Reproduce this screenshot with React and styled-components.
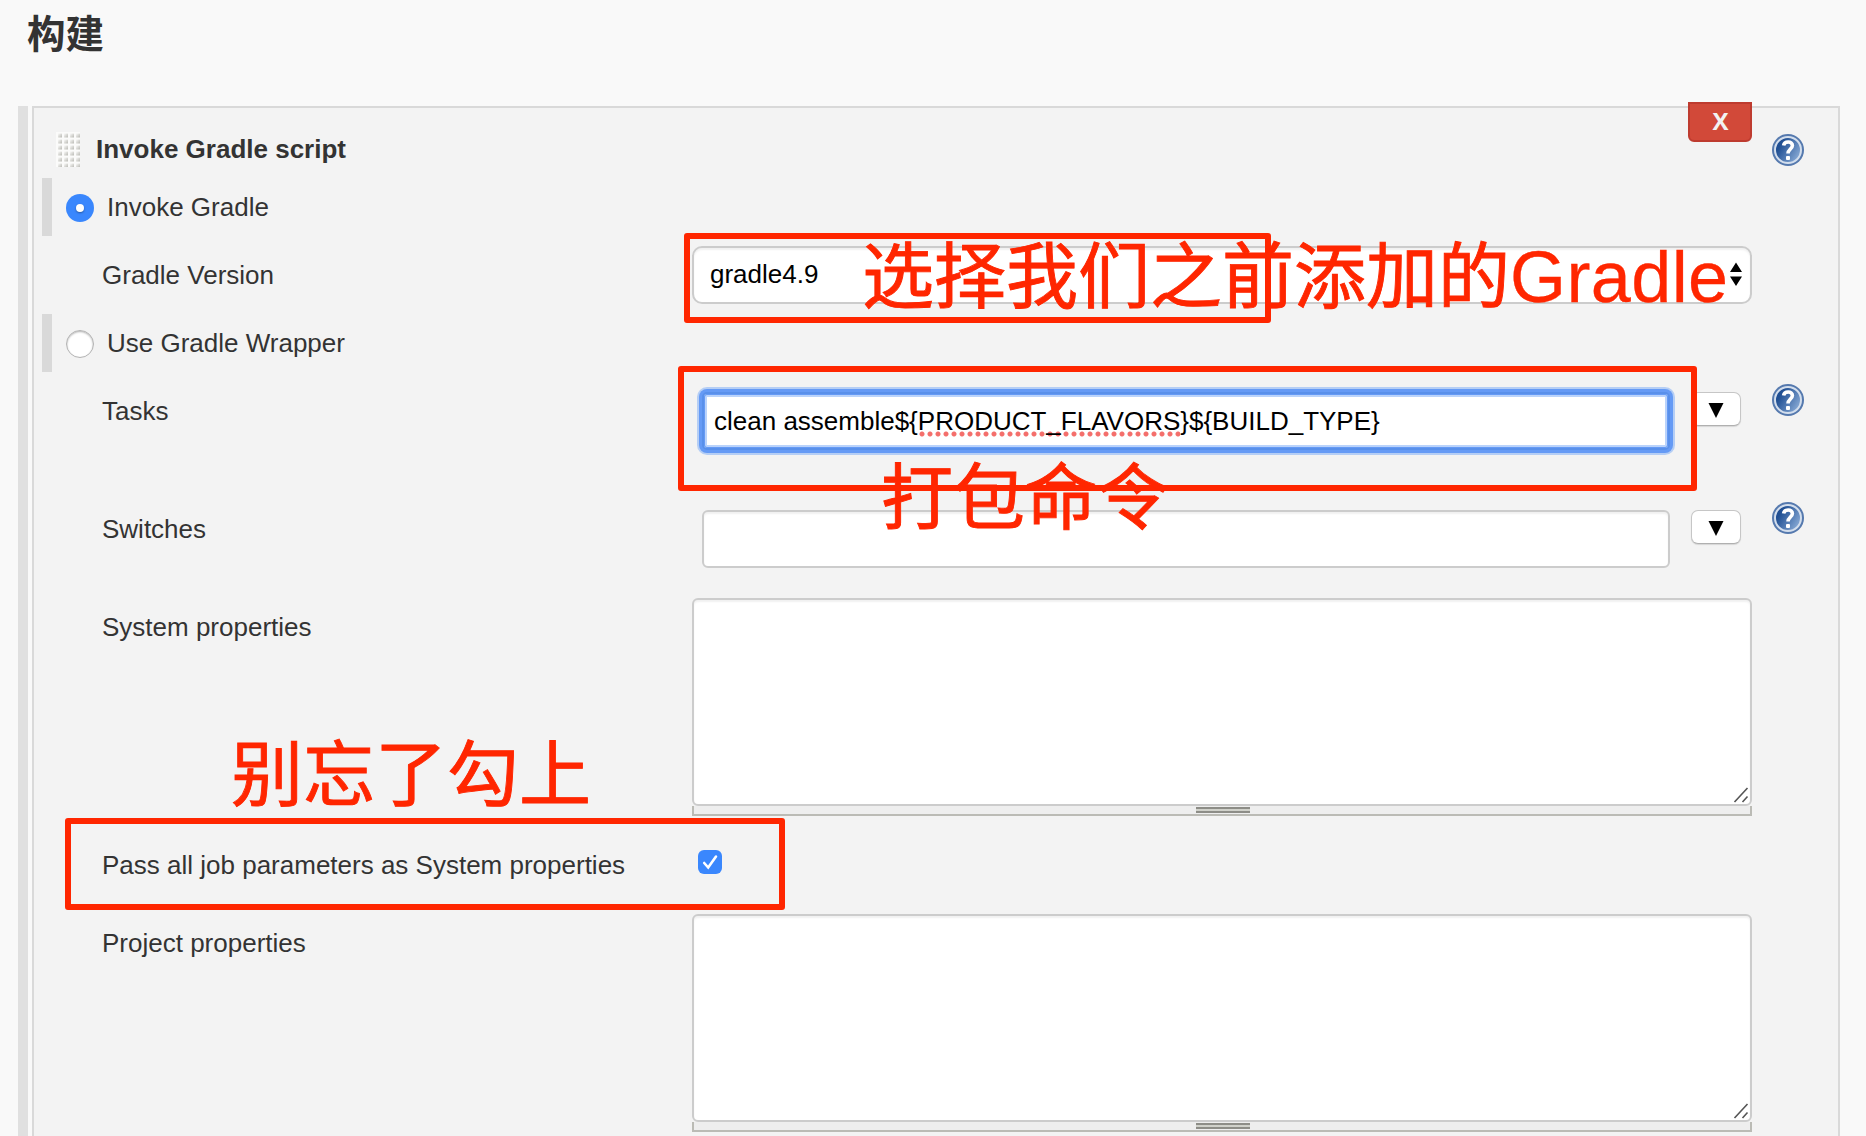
import React from 'react';
import styled, { createGlobalStyle } from 'styled-components';

const RED = '#ff2600';

const GlobalStyle = createGlobalStyle`
  *, *::before, *::after { box-sizing: border-box; }
  body {
    margin: 0;
    background: #f9f9f9;
    color: #333;
    font: 26px/30px "Liberation Sans", "Noto Sans CJK SC", sans-serif;
  }
`;

const Page = styled.main`
  position: relative;
  height: 1136px;
  overflow: hidden;
  display: flex;
  flex-direction: column;
`;

const Heading = styled.h1`
  margin: 0;
  height: 106px;
  padding: 4px 0 0 27px;
  font: 700 38.5px/54px "Noto Sans CJK SC", sans-serif;
`;

const Builder = styled.section`
  flex: 1;
  min-height: 0;
  display: flex;
  gap: 4px;
  padding: 0 26px 0 18px;
`;

const Rail = styled.div`
  width: 10px;
  background: #e0e0e0;
`;

const Panel = styled.div`
  position: relative;
  flex: 1;
  border: 2px solid #d9d9d9;
  border-bottom: 0;
  background: #f3f3f3;
`;

const DeleteButton = styled.button`
  position: absolute;
  top: -6px;
  right: 86px;
  width: 64px;
  height: 40px;
  padding: 0 0 3px 1px;
  border: 2px solid #be3b2f;
  border-radius: 0 0 6px 6px;
  background: #d24939;
  color: #f2f2f2;
  font: 700 24px/32px "Open Sans", "Noto Sans", sans-serif;
`;

const Row = styled.div`
  display: grid;
  grid-template-columns: 658px 1060px 52px;
  height: ${(p) => p.$h}px;
`;

const TitleCell = styled.div`
  display: flex;
  align-items: flex-start;
  gap: 16px;
  padding: 24px 0 0 22px;
  font-weight: 700;
`;

const TitleText = styled.span`
  padding-top: 2px;
`;

const RadioCell = styled.label`
  display: flex;
  gap: 14px;
  margin-left: 8px;
  height: 58px;
`;

const RadioBar = styled.span`
  width: 10px;
  background: #d9d9d9;
`;

const Radio = styled.span`
  width: 28px;
  height: 28px;
  margin-top: 16px;
  display: grid;
  place-items: center;
  border-radius: 50%;
  border: ${(p) => (p.$on ? '0' : '1px solid #b3b3b3')};
  background: ${(p) => (p.$on ? '#3a87fd' : '#fff')};
  box-shadow: ${(p) => (p.$on ? 'none' : 'inset 0 1px 2px rgba(0,0,0,.3)')};
  &::after {
    content: '';
    width: 8px;
    height: 8px;
    border-radius: 50%;
    background: #fff;
    box-shadow: ${(p) => (p.$on ? '0 1px 2px rgba(0,0,0,.35)' : 'none')};
  }
`;

const RadioText = styled.span`
  margin-left: -1px;
  padding-top: 14px;
`;

const Label = styled.div`
  padding: ${(p) => p.$t}px 0 0 68px;
  white-space: nowrap;
`;

const Field = styled.div`
  display: flex;
  align-items: flex-start;
  padding-top: ${(p) => p.$t || 0}px;
  padding-left: ${(p) => p.$l || 0}px;
`;

const HelpCell = styled.div`
  padding: ${(p) => p.$t}px 0 0 20px;
  line-height: 0;
`;

const Select = styled.div`
  width: 1060px;
  height: 58px;
  display: flex;
  justify-content: space-between;
  align-items: flex-start;
  padding: 11px 8px 0 16px;
  border: 2px solid #ccc;
  border-radius: 10px;
  background: #fff;
  box-shadow: inset 0 2px 2px rgba(0, 0, 0, 0.06);
  color: #000;
`;

const TextBox = styled.div`
  width: 968px;
  height: 58px;
  padding: 12px 10px;
  border: 2px solid #ccc;
  border-radius: 6px;
  background: #fff;
  color: #000;
  box-shadow: inset 0 2px 2px rgba(0, 0, 0, 0.06);
  ${(p) =>
    p.$focus &&
    `border-color: #5990ea;
     border-radius: 5px;
     box-shadow: 0 0 0 3px #659af5, 0 0 0 5px #b5cef5, inset 0 0 0 1px #659af5, inset 0 0 0 3px #bad3fb;`}
`;

const Misspelt = styled.span`
  background: radial-gradient(circle at 50% 50%, #f46e6b 2px, rgba(244, 110, 107, 0) 3px) 0 100% / 8px 6px repeat-x;
  padding-bottom: 1px;
`;

const DropButton = styled.button`
  width: 50px;
  height: 34px;
  margin-left: 21px;
  padding: 1px 0 0;
  display: grid;
  place-items: center;
  border: 1px solid #c6c6c6;
  border-bottom-color: #b0b0b0;
  border-radius: 7px;
  background: #fff;
  box-shadow: 0 1px 1px rgba(0, 0, 0, 0.12);
`;

const AreaGroup = styled.div`
  width: 1060px;
`;

const Area = styled.div`
  height: 208px;
  display: flex;
  justify-content: flex-end;
  align-items: flex-end;
  padding: 1px;
  border: 2px solid #ccc;
  border-radius: 6px;
  background: #fff;
  box-shadow: inset 0 2px 2px rgba(0, 0, 0, 0.06);
`;

const AreaHandle = styled.div`
  height: 10px;
  padding: 1px 0 0 2px;
  border: 2px solid #bbbbb5;
  border-top: 0;
  background: #eee;
  &::before {
    content: '';
    display: block;
    width: 54px;
    height: 6px;
    margin: 0 auto;
    border: solid #8d8d87;
    border-width: 2px 0;
    background: #d0d1ca;
  }
`;

const Check = styled.span`
  width: 24px;
  height: 24px;
  display: grid;
  place-items: center;
  border-radius: 6px;
  background: #3a87fd;
`;

const Outline = styled.div`
  position: absolute;
  left: ${(p) => p.$x}px;
  top: ${(p) => p.$y}px;
  width: ${(p) => p.$w}px;
  height: ${(p) => p.$h}px;
  border: 6px solid ${RED};
  border-radius: 3px;
`;

const Note = styled.div`
  position: absolute;
  left: ${(p) => p.$x}px;
  top: ${(p) => p.$y}px;
  color: ${RED};
  font: 72px/72px "Liberation Sans", "Noto Sans CJK SC", sans-serif;
  -webkit-text-stroke: 0.9px ${RED};
  white-space: nowrap;
`;

const Latin = styled.span`
  letter-spacing: 0.4px;
  -webkit-text-stroke: 0.3px ${RED};
`;

const Grip = () => (
  <svg width="24" height="35" viewBox="0 0 24 35">
    <defs>
      <linearGradient id="dot" x1="0" y1="0" x2="1" y2="1">
        <stop offset="0.15" stopColor="#f2f2f0" />
        <stop offset="1" stopColor="#b8b8b2" />
      </linearGradient>
      <pattern id="dots" width="6" height="6" patternUnits="userSpaceOnUse">
        <rect width="6" height="6" fill="#fbfbfa" />
        <rect x="2" y="1.5" width="4" height="4" rx="0.5" fill="url(#dot)" />
      </pattern>
    </defs>
    <rect width="24" height="35" fill="url(#dots)" />
  </svg>
);

const Help = () => (
  <svg width="32" height="32" viewBox="0 0 32 32">
    <defs>
      <linearGradient id="help" x1="0" y1="0.2" x2="1" y2="0.8">
        <stop offset="0.2" stopColor="#204f93" />
        <stop offset="1" stopColor="#8fb0da" />
      </linearGradient>
    </defs>
    <circle cx="16" cy="16" r="16" fill="#5579ae" />
    <circle cx="16" cy="16" r="13" fill="url(#help)" stroke="#d3deed" strokeWidth="2" />
    <path d="M11.600 11.500C12.400 6.800 20.400 7 20.400 11.600C20.400 15 16 15.200 16 19.600" fill="none" stroke="#fff" strokeWidth="3.6" />
    <rect x="14" y="22" width="4" height="4" rx="1" fill="#fff" />
  </svg>
);

const SelectArrows = () => (
  <svg width="12" height="30" viewBox="0 0 12 30">
    <path d="M0 13L6 3.500L12 13ZM0 17.500H12L6 27Z" fill="#000" />
  </svg>
);

const DownArrow = () => (
  <svg width="16" height="16" viewBox="0 0 16 16">
    <path d="M0.5 1H15.5L8 16Z" fill="#000" />
  </svg>
);

const Resizer = () => (
  <svg width="16" height="16" viewBox="0 0 16 16">
    <path d="M1.500 15L14.500 1M9.500 15L14.500 9.500" stroke="#555" strokeWidth="1.6" />
  </svg>
);

const CheckMark = () => (
  <svg width="24" height="24" viewBox="0 0 24 24">
    <path d="M6.200 13L10.200 17.500L18 6.500" fill="none" stroke="#fff" strokeWidth="2.6" strokeLinecap="round" />
  </svg>
);

const RadioOption = ({ on, children }) => (
  <RadioCell>
    <RadioBar />
    <Radio $on={on} />
    <RadioText>{children}</RadioText>
  </RadioCell>
);

const AreaField = () => (
  <AreaGroup>
    <Area>
      <Resizer />
    </Area>
    <AreaHandle />
  </AreaGroup>
);

export default function App() {
  return (
    <Page>
      <GlobalStyle />
      <Heading>构建</Heading>
      <Builder>
        <Rail />
        <Panel>
          <DeleteButton>X</DeleteButton>
          <Row $h={70}>
            <TitleCell>
              <Grip />
              <TitleText>Invoke Gradle script</TitleText>
            </TitleCell>
            <span />
            <HelpCell $t={26}>
              <Help />
            </HelpCell>
          </Row>
          <Row $h={68}>
            <RadioOption on>Invoke Gradle</RadioOption>
          </Row>
          <Row $h={68}>
            <Label $t={14}>Gradle Version</Label>
            <Field>
              <Select>
                gradle4.9
                <SelectArrows />
              </Select>
            </Field>
          </Row>
          <Row $h={70}>
            <RadioOption>Use Gradle Wrapper</RadioOption>
          </Row>
          <Row $h={118}>
            <Label $t={12}>Tasks</Label>
            <Field $t={8} $l={10}>
              <TextBox $focus>
                clean assemble$&#123;<Misspelt>PRODUCT_FLAVORS</Misspelt>&#125;$&#123;BUILD_TYPE&#125;
              </TextBox>
              <DropButton>
                <DownArrow />
              </DropButton>
            </Field>
            <HelpCell $t={0}>
              <Help />
            </HelpCell>
          </Row>
          <Row $h={96}>
            <Label $t={12}>Switches</Label>
            <Field $t={8} $l={10}>
              <TextBox />
              <DropButton>
                <DownArrow />
              </DropButton>
            </Field>
            <HelpCell $t={0}>
              <Help />
            </HelpCell>
          </Row>
          <Row $h={236}>
            <Label $t={14}>System properties</Label>
            <Field>
              <AreaField />
            </Field>
          </Row>
          <Row $h={80}>
            <Label $t={16}>Pass all job parameters as System properties</Label>
            <Field $t={16} $l={6}>
              <Check>
                <CheckMark />
              </Check>
            </Field>
          </Row>
          <Row $h={220}>
            <Label $t={14}>Project properties</Label>
            <Field>
              <AreaField />
            </Field>
          </Row>
        </Panel>
      </Builder>
      <Outline $x={684} $y={233} $w={587} $h={90} />
      <Outline $x={678} $y={365.5} $w={1019} $h={125} />
      <Outline $x={64.5} $y={817.5} $w={720} $h={92} />
      <Note $x={862} $y={241}>
        选择我们之前添加的<Latin>Gradle</Latin>
      </Note>
      <Note $x={881} $y={462}>打包命令</Note>
      <Note $x={231} $y={739}>别忘了勾上</Note>
    </Page>
  );
}
